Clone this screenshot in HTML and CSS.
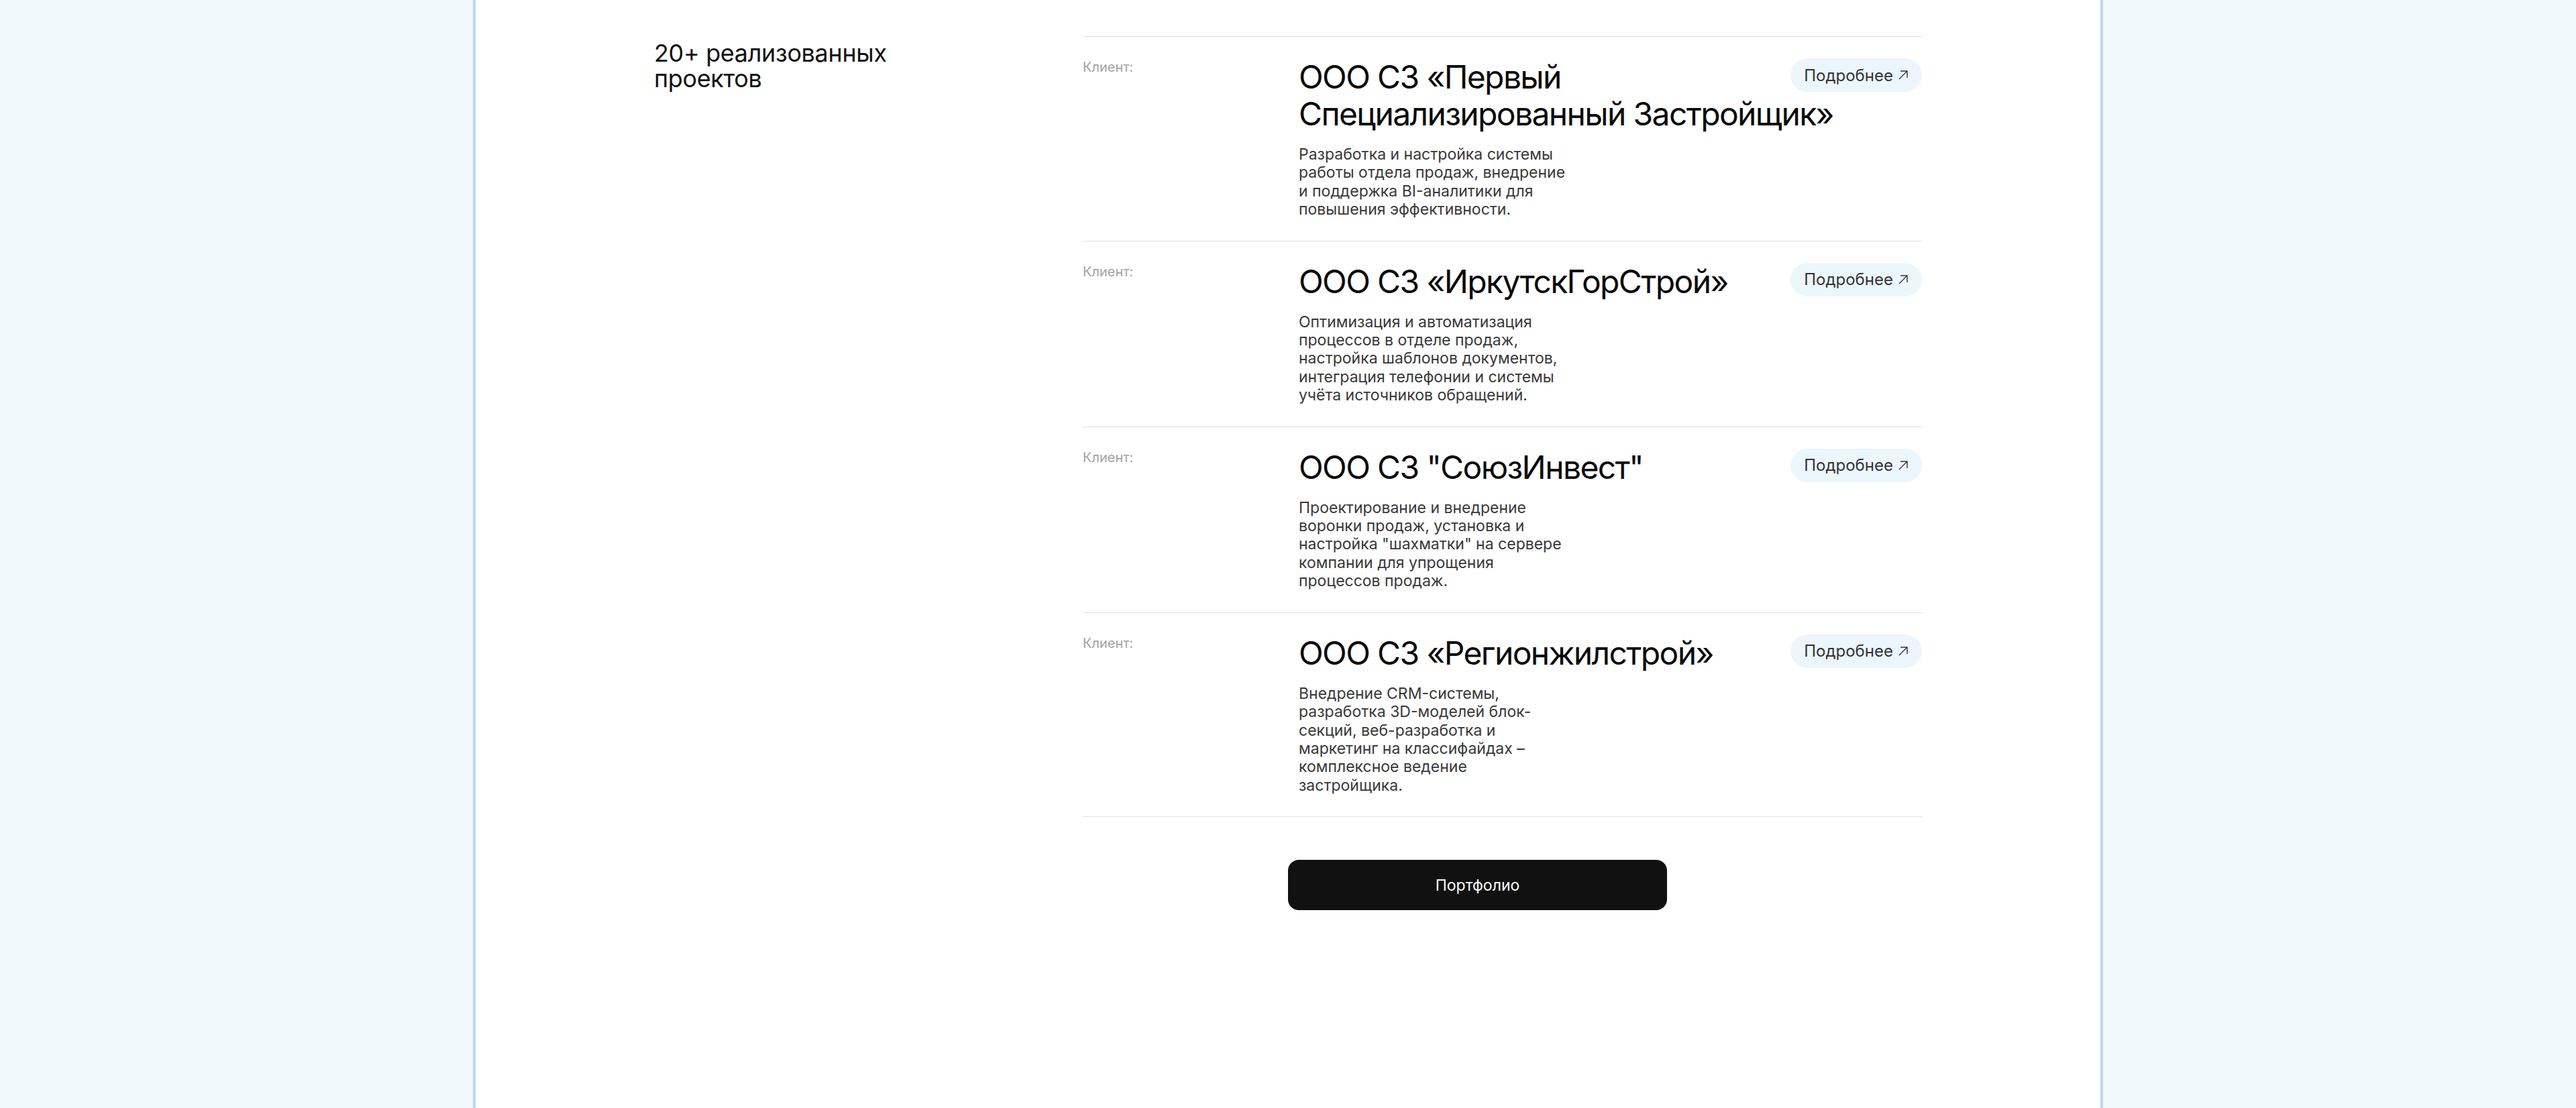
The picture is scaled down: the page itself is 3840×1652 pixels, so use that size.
FILE: index.html
```html
<!DOCTYPE html>
<html lang="ru">
<head>
    <meta charset="UTF-8">
    <meta name="viewport" content="width=device-width, initial-scale=1.0">
    <title>Проекты</title>
    <link rel="stylesheet" href="styles.css">
</head>
<body>
    <div class="page">
        <section class="projects">
            <h2 class="projects-title">20+ реализованных проектов</h2>

            <div class="projects-list">
                <div class="project">
                    <div class="project-label">Клиент:</div>
                    <div class="project-body">
                        <h3 class="project-name">ООО СЗ «Первый Специализированный Застройщик»</h3>
                        <p class="project-text">Разработка и настройка системы работы отдела продаж, внедрение и поддержка BI-аналитики для повышения эффективности.</p>
                    </div>
                    <a href="#" class="more">Подробнее
                        <svg width="16" height="16" viewBox="0 0 16 16" fill="none"><path d="M2 14L14 2M4 2H14V12" stroke="#333" stroke-width="1.4"/></svg>
                    </a>
                </div>

                <div class="project">
                    <div class="project-label">Клиент:</div>
                    <div class="project-body">
                        <h3 class="project-name">ООО СЗ «ИркутскГорСтрой»</h3>
                        <p class="project-text">Оптимизация и автоматизация процессов в отделе продаж, настройка шаблонов документов, интеграция телефонии и системы учёта источников обращений.</p>
                    </div>
                    <a href="#" class="more">Подробнее
                        <svg width="16" height="16" viewBox="0 0 16 16" fill="none"><path d="M2 14L14 2M4 2H14V12" stroke="#333" stroke-width="1.4"/></svg>
                    </a>
                </div>

                <div class="project">
                    <div class="project-label">Клиент:</div>
                    <div class="project-body">
                        <h3 class="project-name">ООО СЗ "СоюзИнвест"</h3>
                        <p class="project-text">Проектирование и внедрение воронки продаж, установка и настройка "шахматки" на сервере компании для упрощения процессов продаж.</p>
                    </div>
                    <a href="#" class="more">Подробнее
                        <svg width="16" height="16" viewBox="0 0 16 16" fill="none"><path d="M2 14L14 2M4 2H14V12" stroke="#333" stroke-width="1.4"/></svg>
                    </a>
                </div>

                <div class="project">
                    <div class="project-label">Клиент:</div>
                    <div class="project-body">
                        <h3 class="project-name">ООО СЗ «Регионжилстрой»</h3>
                        <p class="project-text">Внедрение CRM-системы, разработка 3D-моделей блок-секций, веб-разработка и маркетинг на классифайдах – комплексное ведение застройщика.</p>
                    </div>
                    <a href="#" class="more">Подробнее
                        <svg width="16" height="16" viewBox="0 0 16 16" fill="none"><path d="M2 14L14 2M4 2H14V12" stroke="#333" stroke-width="1.4"/></svg>
                    </a>
                </div>

                <div class="projects-footer">
                    <a href="#" class="portfolio-btn">Портфолио</a>
                </div>
            </div>
        </section>
    </div>
</body>
</html>
```

FILE: styles.css
```css
body {
    font-family: Inter, "Noto Sans", sans-serif;
    margin: 0;
    padding: 0;
    background-color: #f0f8fc;
    color: #111;
}
.page {
    width: 2430px;
    min-height: 1652px;
    margin: 0 auto;
    padding: 54px 266px 0;
    box-sizing: border-box;
    background-color: #fff;
    border-left: 4px solid #b7d8f1;
    border-right: 4px solid #b7d8f1;
}
.projects {
    display: grid;
    grid-template-columns: 639px 1fr;
}
.projects-title {
    margin: 6px 0 0;
    max-width: 380px;
    font-size: 36px;
    line-height: 38px;
    font-weight: 400;
    letter-spacing: -0.01em;
}
.projects-list {
    border-top: 1px solid #e0e0e0;
}
.project {
    display: grid;
    grid-template-columns: 322px 1fr;
    align-items: start;
    padding: 32px 0;
    border-bottom: 1px solid #e0e0e0;
}
.project-label {
    grid-area: 1 / 1;
    font-size: 20px;
    line-height: 26px;
    color: #a3a3a3;
}
.project-body {
    grid-area: 1 / 2;
}
.project-name {
    margin: 0;
    max-width: 840px;
    font-size: 48px;
    line-height: 55px;
    font-weight: 400;
    letter-spacing: -0.034em;
    color: #0a0a0a;
}
.project-text {
    margin: 20px 0 0;
    max-width: 400px;
    font-size: 23px;
    line-height: 27.4px;
    color: #383838;
}
.more {
    grid-area: 1 / 2;
    justify-self: end;
    display: flex;
    align-items: center;
    gap: 7px;
    height: 50px;
    padding: 0 20px;
    border-radius: 25px;
    background-color: #ecf6fd;
    color: #333;
    font-size: 24px;
    text-decoration: none;
}
.projects-footer {
    padding: 64px 0 0 306px;
}
.portfolio-btn {
    display: flex;
    align-items: center;
    justify-content: center;
    width: 565px;
    height: 75px;
    border-radius: 16px;
    background-color: #111;
    color: #fff;
    font-size: 23px;
    text-decoration: none;
}
```
